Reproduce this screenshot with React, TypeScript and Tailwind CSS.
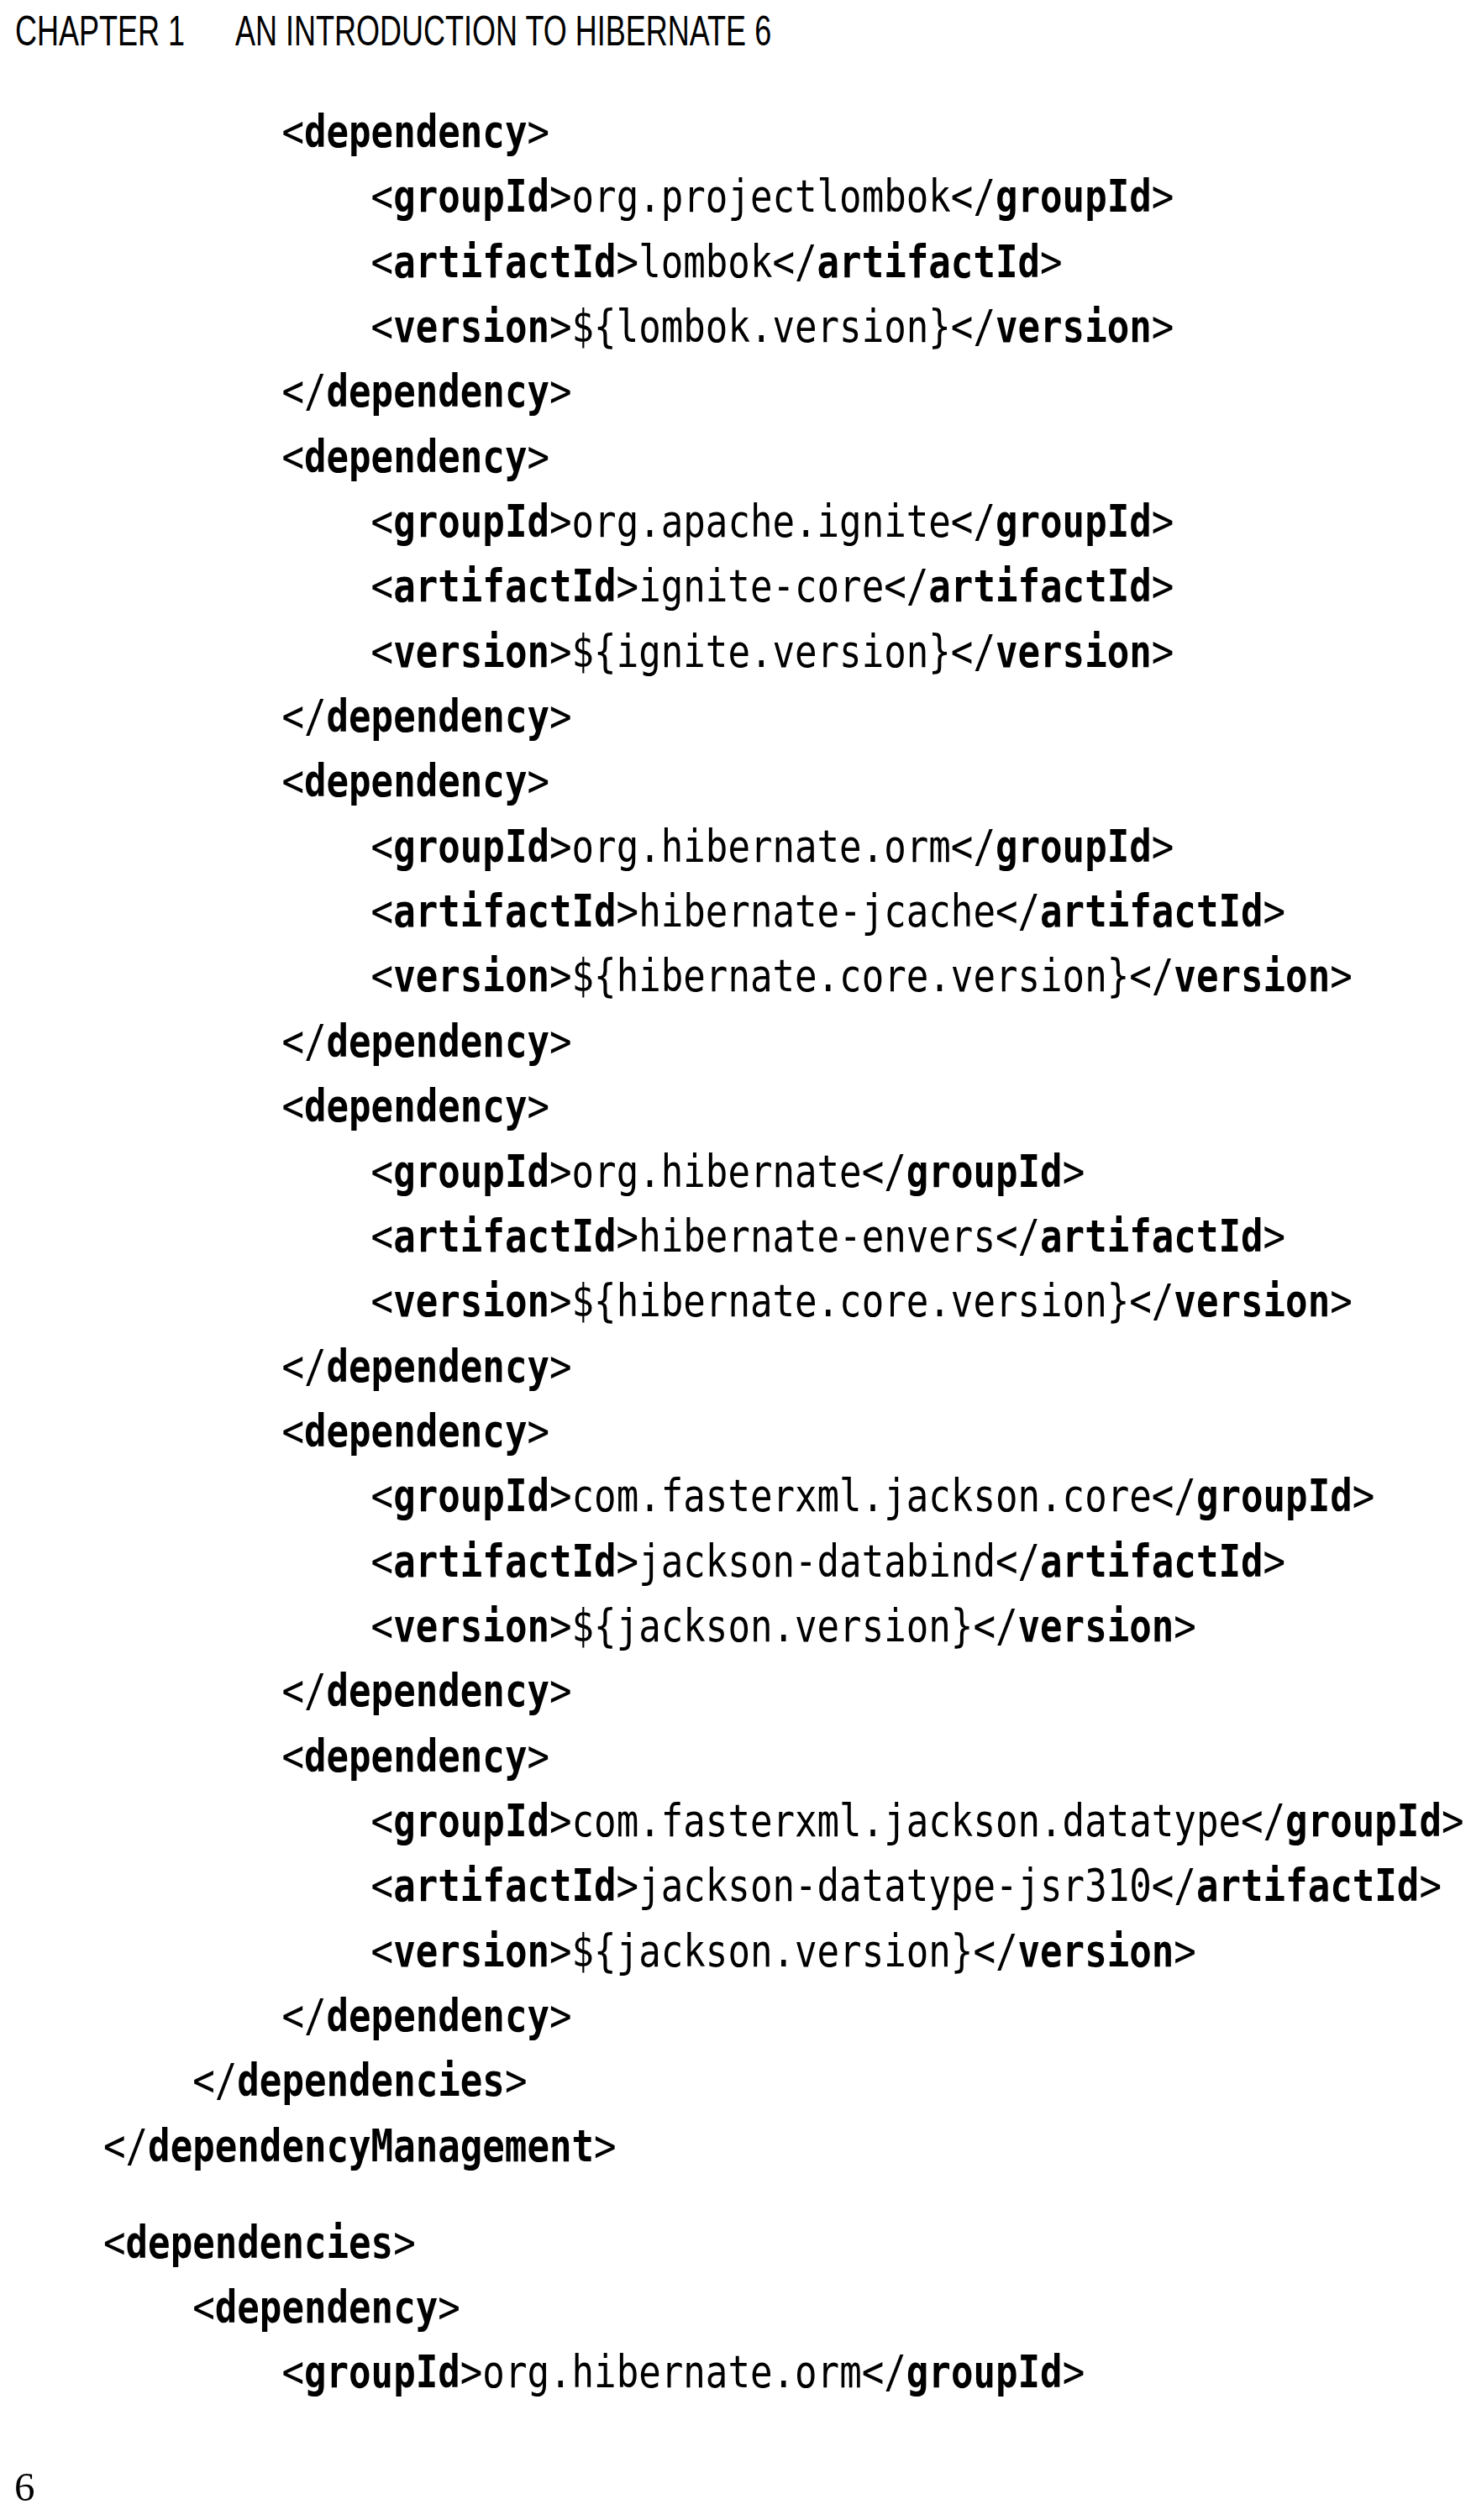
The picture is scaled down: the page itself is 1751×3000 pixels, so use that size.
import React from "react";

type Line =
  | { i: number; kind: "open" | "close"; tag: string }
  | { i: number; kind: "elem"; tag: string; text: string };

const dep = (a: string, b: string, c: string): Line[] => [
  { i: 8, kind: "open", tag: "dependency" },
  { i: 12, kind: "elem", tag: "groupId", text: a },
  { i: 12, kind: "elem", tag: "artifactId", text: b },
  { i: 12, kind: "elem", tag: "version", text: c },
  { i: 8, kind: "close", tag: "dependency" },
];

const block1: Line[] = [
  ...dep("org.projectlombok", "lombok", "${lombok.version}"),
  ...dep("org.apache.ignite", "ignite-core", "${ignite.version}"),
  ...dep("org.hibernate.orm", "hibernate-jcache", "${hibernate.core.version}"),
  ...dep("org.hibernate", "hibernate-envers", "${hibernate.core.version}"),
  ...dep("com.fasterxml.jackson.core", "jackson-databind", "${jackson.version}"),
  ...dep("com.fasterxml.jackson.datatype", "jackson-datatype-jsr310", "${jackson.version}"),
  { i: 4, kind: "close", tag: "dependencies" },
  { i: 0, kind: "close", tag: "dependencyManagement" },
];

const block2: Line[] = [
  { i: 0, kind: "open", tag: "dependencies" },
  { i: 4, kind: "open", tag: "dependency" },
  { i: 8, kind: "elem", tag: "groupId", text: "org.hibernate.orm" },
];

function CodeLine({ l }: { l: Line }) {
  const pad = " ".repeat(l.i);
  if (l.kind === "open")
    return (
      <div className="whitespace-pre">
        {pad}
        {"<"}
        <b className="font-bold">{l.tag}</b>
        {">"}
      </div>
    );
  if (l.kind === "close")
    return (
      <div className="whitespace-pre">
        {pad}
        {"</"}
        <b className="font-bold">{l.tag}</b>
        {">"}
      </div>
    );
  return (
    <div className="whitespace-pre">
      {pad}
      {"<"}
      <b className="font-bold">{l.tag}</b>
      {">"}
      {l.text}
      {"</"}
      <b className="font-bold">{l.tag}</b>
      {">"}
    </div>
  );
}

export default function App() {
  return (
    <div className="w-[1751px] h-[3000px] bg-white text-black overflow-hidden">
      <header className="pt-[12px] pl-[18px]">
        <div className="flex origin-left scale-x-[0.72] text-[50px] leading-[50px] font-['Liberation_Sans',Arial,sans-serif] w-max">
          <span className="w-[364px] whitespace-pre">CHAPTER 1</span>
          <span className="whitespace-pre">AN INTRODUCTION TO HIBERNATE 6</span>
        </div>
      </header>

      <main className="mt-[56px] pl-[123px]">
        <div className="origin-left scale-x-[0.832] w-max text-[53px] leading-[77.35px] font-['DejaVu_Sans_Mono','Liberation_Mono',monospace]">
          {block1.map((l, k) => (
            <CodeLine key={k} l={l} />
          ))}
          <div className="h-[37.65px]" />
          {block2.map((l, k) => (
            <CodeLine key={"b" + k} l={l} />
          ))}
        </div>
      </main>

      <footer className="mt-[73px] pl-[17px] text-[49px] leading-[49px] font-['Liberation_Serif','Times_New_Roman',serif]">
        6
      </footer>
    </div>
  );
}
